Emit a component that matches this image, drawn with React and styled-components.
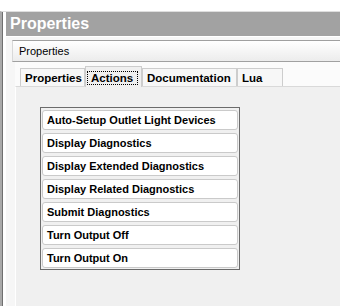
import React from "react";
import styled, { createGlobalStyle } from "styled-components";

const Global = createGlobalStyle`
  html, body { margin: 0; padding: 0; background: #fff; }
  body { width: 340px; height: 306px; overflow: hidden; font-family: "Liberation Sans", Arial, sans-serif; }
`;

const Screen = styled.div`
  width: 340px;
  height: 306px;
  padding-top: 11px;
  box-sizing: border-box;
  display: flex;
  flex-direction: column;
  background: #fff;
`;

const Frame = styled.div`
  flex: 1;
  display: flex;
  flex-direction: column;
  border-top: 1px solid #dedede;
  border-left: 2px solid #a9a9a9;
  padding-left: 4px;
  box-shadow: inset 1px 0 0 #6f6f6f, inset 4px 0 0 #ffffff;
  background: #f0f0f0;
  min-height: 0;
`;

const TitleBar = styled.div`
  height: 24px;
  line-height: 24px;
  background: #a2a2a2;
  color: #fff;
  font-weight: bold;
  font-size: 16px;
  padding-left: 4px;
`;

const Body = styled.div`
  flex: 1;
  display: flex;
  flex-direction: column;
  border-top: 1px solid #fff;
  padding: 3px 0 0 6px;
  background: #f6f6f6;
  min-height: 0;
`;

const SubHeader = styled.div`
  height: 20px;
  line-height: 20px;
  border-top: 1px solid #a0a0a0;
  border-bottom: 1px solid #a0a0a0;
  border-left: 1px solid #d8d8d8;
  background: linear-gradient(#ffffff, #ececec);
  padding-left: 6px;
  font-size: 11px;
  color: #000;
`;

const TabControl = styled.div`
  flex: 1;
  display: flex;
  flex-direction: column;
  margin-left: 3px;
  background: #fbfbfb;
  min-height: 0;
`;

const TabStrip = styled.div`
  height: 24px;
  display: flex;
  align-items: flex-end;
  padding-left: 5px;
  position: relative;
  z-index: 1;
`;

const Tab = styled.div`
  box-sizing: border-box;
  width: ${(p) => p.$w}px;
  height: ${(p) => (p.$active ? 21 : 18)}px;
  padding: ${(p) => (p.$active ? "2px 0 0 1px" : "1px 0 0 4px")};
  margin-bottom: ${(p) => (p.$active ? -1 : 0)}px;
  border: 1px solid #cdcdcd;
  border-bottom: none;
  background: ${(p) => (p.$active ? "#f0f0f0" : "#f7f7f7")};
  font-weight: bold;
  font-size: 11.5px;
  color: #000;
  display: flex;
  align-items: center;
  position: relative;
  z-index: ${(p) => (p.$active ? 2 : 1)};
`;

const FocusLabel = styled.span`
  outline: 1px dotted #000;
  outline-offset: -1px;
  width: 51px;
  padding-left: 4px;
  box-sizing: border-box;
  line-height: 14px;
`;

const Panel = styled.div`
  flex: 1;
  border-top: 1px solid #d9d9d9;
  border-left: 1px solid #ffffff;
  background: #f0f0f0;
  padding: 20px 0 0 24px;
`;

const ActionBox = styled.div`
  width: 200px;
  box-sizing: border-box;
  border: 1px solid #6b6b6b;
  padding: 2px 1px 1px 1px;
  display: flex;
  flex-direction: column;
  gap: 3px;
`;

const ActionButton = styled.div`
  height: 20px;
  box-sizing: border-box;
  border: 1px solid #cacaca;
  border-radius: 3px;
  background: #fff;
  padding-left: 4px;
  display: flex;
  align-items: center;
  font-weight: bold;
  font-size: 11px;
  color: #000;
  white-space: nowrap;
`;

const tabs = [
  { label: "Properties", width: 65 },
  { label: "Actions", width: 57, active: true },
  { label: "Documentation", width: 95 },
  { label: "Lua", width: 46 },
];
const actions = [
  "Auto-Setup Outlet Light Devices",
  "Display Diagnostics",
  "Display Extended Diagnostics",
  "Display Related Diagnostics",
  "Submit Diagnostics",
  "Turn Output Off",
  "Turn Output On",
];

export default function App() {
  return (
    <>
      <Global />
      <Screen>
        <Frame>
          <TitleBar>Properties</TitleBar>
          <Body>
            <SubHeader>Properties</SubHeader>
            <TabControl>
              <TabStrip>
                {tabs.map((t) =>
                  t.active ? (
                    <Tab key={t.label} $w={t.width} $active>
                      <FocusLabel>{t.label}</FocusLabel>
                    </Tab>
                  ) : (
                    <Tab key={t.label} $w={t.width}>
                      {t.label}
                    </Tab>
                  )
                )}
              </TabStrip>
              <Panel>
                <ActionBox>
                  {actions.map((a) => (
                    <ActionButton key={a}>{a}</ActionButton>
                  ))}
                </ActionBox>
              </Panel>
            </TabControl>
          </Body>
        </Frame>
      </Screen>
    </>
  );
}
